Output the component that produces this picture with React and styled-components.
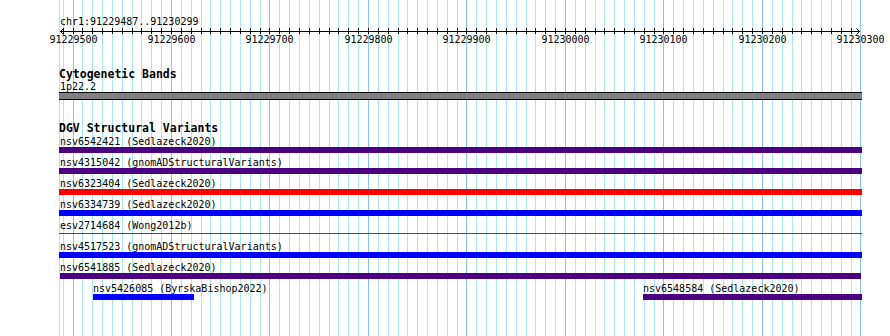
import React from 'react';
import styled, { createGlobalStyle } from 'styled-components';

const GlobalStyle = createGlobalStyle`
  html, body { margin: 0; padding: 0; background: #ffffff; }
  body { font-family: "DejaVu Sans Mono", "Liberation Mono", monospace; color: #000; }
`;

const START = 91229500;
const xOf = (bp) => Math.floor(73 + (bp - START) * 0.98495);

const gridLines = [];
for (let bp = 91229490; bp <= 91230300; bp += 10) {
  gridLines.push({ x: xOf(bp), major: bp % 100 === 0, bp });
}

const View = styled.div`
  position: relative;
  width: 890px;
  height: 336px;
  overflow: hidden;
  background: #ffffff;
`;

const GridLayer = styled.svg`
  position: absolute;
  left: 0;
  top: 0;
  z-index: 0;
`;

const Content = styled.div`
  position: relative;
  z-index: 1;
  display: flex;
  flex-direction: column;
  padding-top: 16px;
`;

const Location = styled.div`
  margin-left: 60px;
  font-size: 10px;
  line-height: 11px;
  height: 11px;
  white-space: nowrap;
`;

const RulerSvg = styled.svg`
  display: block;
  overflow: visible;
`;

const TrackTitle = styled.div`
  margin-left: 59px;
  margin-top: ${(p) => p.$top}px;
  font-size: 11.5px;
  font-weight: bold;
  line-height: 14px;
  height: 14px;
  white-space: nowrap;
`;

const BandLabel = styled.div`
  margin-left: 60px;
  font-size: 10px;
  line-height: 11px;
  height: 11px;
`;

const Band = styled.div`
  margin-left: 59px;
  width: 803px;
  height: 6px;
  background: #808080;
  border-top: 1px solid #000;
  border-bottom: 1px solid #000;
`;

const Track = styled.div`
  margin-left: 59px;
  margin-top: 1px;
  width: 803px;
  display: flex;
  flex-direction: column;
`;

const Row = styled.div`
  position: relative;
  height: 21px;
`;

const Feature = styled.div`
  position: absolute;
  top: 0;
  display: flex;
  flex-direction: column;
`;

const FeatureLabel = styled.div`
  font-size: 10px;
  line-height: 11px;
  height: 11px;
  white-space: nowrap;
  padding-left: ${(p) => p.$inset}px;
`;

const Bar = styled.div`
  height: 6px;
  background: ${(p) => p.$color};
`;

const ThinBar = styled.div`
  height: 6px;
  display: flex;
  flex-direction: column;
  &::before {
    content: '';
    margin-top: 2px;
    height: 1px;
    background: ${(p) => p.$color};
  }
`;

const PURPLE = '#4b0082';
const RED = '#ff0000';
const BLUE = '#0000ff';

const rows = [
  [{ label: 'nsv6542421 (Sedlazeck2020)', color: PURPLE, from: 0, to: 803, inset: 1 }],
  [{ label: 'nsv4315042 (gnomADStructuralVariants)', color: PURPLE, from: 0, to: 803, inset: 1 }],
  [{ label: 'nsv6323404 (Sedlazeck2020)', color: RED, from: 0, to: 803, inset: 1 }],
  [{ label: 'nsv6334739 (Sedlazeck2020)', color: BLUE, from: 0, to: 803, inset: 1 }],
  [{ label: 'esv2714684 (Wong2012b)', color: RED, from: 0, to: 803, inset: 1, thin: true }],
  [{ label: 'nsv4517523 (gnomADStructuralVariants)', color: BLUE, from: 0, to: 803, inset: 1 }],
  [{ label: 'nsv6541885 (Sedlazeck2020)', color: PURPLE, from: 1, to: 802, inset: 0 }],
  [
    { label: 'nsv5426085 (ByrskaBishop2022)', color: BLUE, from: 34, to: 135, inset: 0 },
    { label: 'nsv6548584 (Sedlazeck2020)', color: PURPLE, from: 584, to: 803, inset: 0 },
  ],
];

function Grid() {
  return (
    <GridLayer width="890" height="336">
      <line x1="59.5" x2="59.5" y1="0" y2="336" stroke="#a8e8ee" />
      {gridLines.map((g) => (
        <line
          key={g.bp}
          x1={g.x + 0.5}
          x2={g.x + 0.5}
          y1="0"
          y2="336"
          stroke={g.major ? '#88c4ec' : '#a8e8ee'}
        />
      ))}
    </GridLayer>
  );
}

function Ruler() {
  return (
    <RulerSvg width="890" height="21">
      <line x1="60" x2="860" y1="4.5" y2="4.5" stroke="#000" />
      <path d="M63.5 1.5 L60.5 4.5 L63.5 7.5" fill="none" stroke="#000" />
      <path d="M856.5 1.5 L859.5 4.5 L856.5 7.5" fill="none" stroke="#000" />
      {gridLines
        .filter((g) => g.bp < 91230300)
        .map((g) => (
          <line key={g.bp} x1={g.x + 0.5} x2={g.x + 0.5} y1="1" y2="7" stroke="#000" />
        ))}
      {gridLines
        .filter((g) => g.major)
        .map((g) => (
          <text
            key={g.bp}
            x={g.x + 0.5}
            y="16"
            textAnchor="middle"
            fontSize="10"
            fontFamily='"DejaVu Sans Mono", monospace'
            fill="#000"
          >
            {g.bp}
          </text>
        ))}
    </RulerSvg>
  );
}

export default function App() {
  return (
    <>
      <GlobalStyle />
      <View>
        <Grid />
        <Content>
          <Location>chr1:91229487..91230299</Location>
          <Ruler />
          <TrackTitle $top={19}>Cytogenetic Bands</TrackTitle>
          <BandLabel>1p22.2</BandLabel>
          <Band />
          <TrackTitle $top={21}>DGV Structural Variants</TrackTitle>
          <Track>
            {rows.map((row, i) => (
              <Row key={i}>
                {row.map((f) => (
                  <Feature key={f.label} style={{ left: f.from, width: f.to - f.from }}>
                    <FeatureLabel $inset={f.inset}>{f.label}</FeatureLabel>
                    {f.thin ? <ThinBar $color={f.color} /> : <Bar $color={f.color} />}
                  </Feature>
                ))}
              </Row>
            ))}
          </Track>
        </Content>
      </View>
    </>
  );
}
